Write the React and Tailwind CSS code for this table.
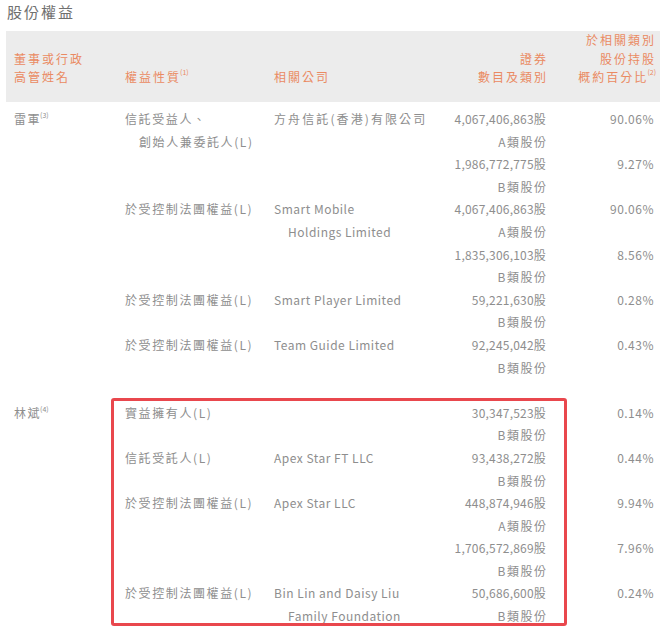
// 股份權益 — directors' interests table
const FONT = { fontFamily: '"Noto Sans CJK TC", "Noto Sans", sans-serif' };

const DIRECTORS = [
  {
    name: '雷軍',
    note: '(3)',
    entries: [
      {
        nature: ['信託受益人、', '創始人兼委託人(L)'],
        company: ['方舟信託(香港)有限公司'],
        cjkCompany: true,
        holdings: [
          { shares: '4,067,406,863股', cls: 'A類股份', pct: '90.06%' },
          { shares: '1,986,772,775股', cls: 'B類股份', pct: '9.27%' },
        ],
      },
      {
        nature: ['於受控制法團權益(L)'],
        company: ['Smart Mobile', 'Holdings Limited'],
        holdings: [
          { shares: '4,067,406,863股', cls: 'A類股份', pct: '90.06%' },
          { shares: '1,835,306,103股', cls: 'B類股份', pct: '8.56%' },
        ],
      },
      {
        nature: ['於受控制法團權益(L)'],
        company: ['Smart Player Limited'],
        holdings: [{ shares: '59,221,630股', cls: 'B類股份', pct: '0.28%' }],
      },
      {
        nature: ['於受控制法團權益(L)'],
        company: ['Team Guide Limited'],
        holdings: [{ shares: '92,245,042股', cls: 'B類股份', pct: '0.43%' }],
      },
    ],
  },
  {
    name: '林斌',
    note: '(4)',
    boxed: true,
    entries: [
      {
        nature: ['實益擁有人(L)'],
        company: [],
        holdings: [{ shares: '30,347,523股', cls: 'B類股份', pct: '0.14%' }],
      },
      {
        nature: ['信託受託人(L)'],
        company: ['Apex Star FT LLC'],
        holdings: [{ shares: '93,438,272股', cls: 'B類股份', pct: '0.44%' }],
      },
      {
        nature: ['於受控制法團權益(L)'],
        company: ['Apex Star LLC'],
        holdings: [
          { shares: '448,874,946股', cls: 'A類股份', pct: '9.94%' },
          { shares: '1,706,572,869股', cls: 'B類股份', pct: '7.96%' },
        ],
      },
      {
        nature: ['於受控制法團權益(L)'],
        company: ['Bin Lin and Daisy Liu', 'Family Foundation'],
        holdings: [{ shares: '50,686,600股', cls: 'B類股份', pct: '0.24%' }],
      },
    ],
  },
];

function Sup({ children, body }) {
  return (
    <span
      className={`inline-block align-top text-[7px] leading-[8px] tracking-normal -ml-[1px] relative ${
        body ? 'top-[3px]' : 'top-[0px]'
      }`}
    >
      {children}
    </span>
  );
}

function Lines({ lines }) {
  return lines.map((l, i) => (
    <div key={i} className={i > 0 ? 'pl-[14px] whitespace-nowrap' : 'whitespace-nowrap'}>
      {l}
    </div>
  ));
}

function Entry({ e }) {
  return (
    <div className="grid grid-cols-[149px_166px_1fr]">
      <div className="tracking-[1.6px]"><Lines lines={e.nature} /></div>
      <div className={e.cjkCompany ? 'tracking-[2.1px]' : 'tracking-[0.5px]'}>
        <Lines lines={e.company} />
      </div>
      <div>
        {e.holdings.map((h, i) => (
          <div key={i} className="grid grid-cols-[1fr_108px]">
            <div className="text-right">
              <div className="tracking-[0.2px]">{h.shares}</div>
              <div className="tracking-[1.5px] -mr-[1.5px]">{h.cls}</div>
            </div>
            <div className="text-right tracking-[0.5px]">{h.pct}</div>
          </div>
        ))}
      </div>
    </div>
  );
}

export default function App() {
  return (
    <div className="w-[660px] bg-white text-[#8e8e8e]" style={FONT}>
      {/* Title */}
      <div className="h-[31px] pl-[7px] pt-[1px] text-[15px] leading-[22px] tracking-[2px] text-[#707070]">股份權益</div>

      {/* Header */}
      <div className="ml-[6px] h-[71px] bg-[#ececec] grid grid-cols-[119px_149px_166px_106px_108px_6px] items-end pb-[16px] text-[12px] leading-[18.5px] tracking-[2px] text-[#ea8a62]">
        <div className="pl-[8px]">
          <div>董事或行政</div>
          <div>高管姓名</div>
        </div>
        <div>權益性質<Sup>(1)</Sup></div>
        <div>相關公司</div>
        <div className="text-right -mr-[2px]">
          <div>證券</div>
          <div>數目及類別</div>
        </div>
        <div className="text-right -mr-[2px] whitespace-nowrap">
          <div>於相關類別</div>
          <div>股份持股</div>
          <div>概約百分比<Sup>(2)</Sup></div>
        </div>
        <div />
      </div>

      {/* Body */}
      <div className="pt-[6px] pr-[6px] text-[12px] leading-[22.6px]">
        {DIRECTORS.map((d, di) => (
          <div key={d.name} className={di > 0 ? 'flex pt-[22.6px]' : 'flex'}>
            <div className="w-[125px] shrink-0 pl-[14px] tracking-[1.5px]">
              {d.name}<Sup body>{d.note}</Sup>
            </div>
            <div className="relative flex-1">
              {d.entries.map((e, i) => (
                <Entry key={i} e={e} />
              ))}
              {d.boxed && (
                <div className="absolute -left-[14px] top-[-4px] bottom-[2px] w-[456px] border-[3px] border-[#e9474d] rounded-[3px] pointer-events-none" />
              )}
            </div>
          </div>
        ))}
      </div>
    </div>
  );
}
